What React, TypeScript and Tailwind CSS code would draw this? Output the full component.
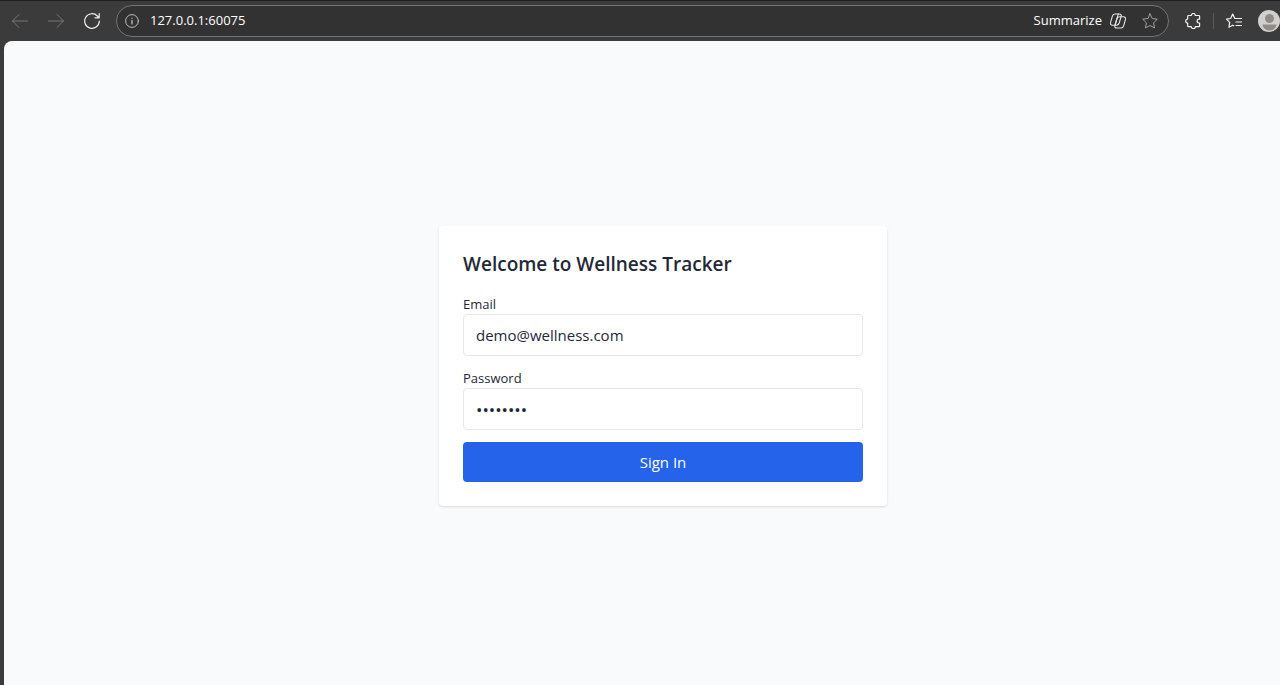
import { useState, type ReactNode } from "react";

type IconProps = { children: ReactNode; className?: string };

function Icon({ children, className = "size-4" }: IconProps) {
  return (
    <svg
      viewBox="0 0 16 16"
      fill="none"
      stroke="currentColor"
      strokeWidth="1"
      strokeLinecap="round"
      strokeLinejoin="round"
      aria-hidden="true"
      className={`shrink-0 ${className}`}
    >
      {children}
    </svg>
  );
}

function ToolButton({ label, children, className }: { label: string; children: ReactNode; className: string }) {
  return (
    <button type="button" aria-label={label} className={`flex shrink-0 items-center justify-center ${className}`}>
      {children}
    </button>
  );
}

function Toolbar() {
  return (
    <header className="flex h-[41px] shrink-0 items-center border-t border-[#202020] bg-[#3b3b3b] pb-px pl-0.5 text-sm text-white">
      <nav className="mr-1.5 flex" aria-label="History">
        <ToolButton label="Back" className="h-8 w-9 text-[#777777]">
          <Icon>
            <path d="M15.5 8H.5M7 1.5.5 8 7 14.5" />
          </Icon>
        </ToolButton>
        <ToolButton label="Forward" className="h-8 w-9 text-[#777777]">
          <Icon>
            <path d="M.5 8h15M9 1.5 15.5 8 9 14.5" />
          </Icon>
        </ToolButton>
        <ToolButton label="Reload" className="h-8 w-9 text-[#f0f0f0]">
          <Icon>
            <path strokeWidth="1.2" d="M15.3 8A7.3 7.3 0 1 1 13.3 3l1.5 1.7M15.2.6v4.2H11" />
          </Icon>
        </ToolButton>
      </nav>

      <div className="flex h-8 min-w-0 flex-1 items-center rounded-full border border-[#747474] bg-[#323232] pr-2.5 pl-2">
        <Icon className="size-3.5 text-[#d0d0d0]">
          <circle cx="8" cy="8" r="7.3" />
          <path strokeWidth="1.3" d="M8 7.3v4M8 4.7v.1" />
        </Icon>
        <input
          aria-label="Address"
          defaultValue="127.0.0.1:60075"
          className="ml-[11px] min-w-0 flex-1 bg-transparent text-[13px] outline-none"
        />
        <button type="button" className="flex items-center gap-2 text-[13px]">
          Summarize
          <Icon className="size-4 text-[#e4e4e4]">
            <path
              strokeWidth="1.1"
              d="M4.9 1h4.3c1.6 0 2.4 1 1.9 2.600L9.200 10c-.5 1.500-1.300 2.200-2.800 2.200H2.500C.9 12.200.1 11 .6 9.400l1.700-6C2.700 1.800 3.500 1 4.900 1Z"
            />
            <path
              strokeWidth="1.1"
              d="M11.100 15H6.800c-1.600 0-2.400-1-1.900-2.600L6.800 6c.5-1.500 1.300-2.200 2.800-2.200h3.900c1.600 0 2.400 1.200 1.900 2.800l-1.700 6c-.4 1.600-1.200 2.400-2.600 2.400Z"
            />
            <path strokeWidth="1.1" d="m8.300 1-3 10.500" />
          </Icon>
        </button>
        <ToolButton label="Add to favorites" className="ml-4 text-[#a0a0a0]">
          <Icon>
            <path d="m8 .8 2.200 4.700 5.100.7-3.700 3.600.9 5.100L8 12.500l-4.500 2.400.9-5.100L.7 6.200l5.100-.7Z" />
          </Icon>
        </ToolButton>
      </div>

      <div className="ml-4 flex shrink-0 items-center text-[#f2f2f2]">
        <ToolButton label="Extensions" className="">
          <Icon>
            <path
              strokeWidth="1.2"
              d="M3.500 2.500h2.800a2 2 0 0 1 4 0h3.500c.5 0 .8.3.8.8v2.900H14a1.900 1.900 0 0 0 0 3.800h.6v2.900c0 .5-.3.800-.8.8h-3.500a2 2 0 0 1-4 0H3.500c-.5 0-.8-.3-.8-.8v-2.800a2 2 0 0 1 0-4V3.300c0-.5.3-.8.8-.8Z"
            />
          </Icon>
        </ToolButton>
        <span className="mx-3 h-4 w-px bg-[#5c5c5c]" />
        <ToolButton label="Favorites" className="">
          <Icon>
            <path
              strokeWidth="1.2"
              d="M10 5.500H8.800L6.700 1 4.600 5.500.5 6.100l3.200 3.300-.8 4.900 3.800-2.100 1 .6M10 5.500h5.500M10 9h5.500M10 12.500h5.500"
            />
          </Icon>
        </ToolButton>
        <ToolButton label="Profile" className="ml-4">
          <svg viewBox="0 0 22 22" className="size-[22px]" aria-hidden="true">
            <circle cx="11" cy="11" r="11" fill="#d2d0ce" />
            <circle cx="11.5" cy="8.5" r="4.5" fill="#8f8b88" />
            <path d="M4.500 14.500h14c-.3 3.600-3.500 6-7 6s-6.700-2.400-7-6Z" fill="#8f8b88" />
          </svg>
        </ToolButton>
      </div>
    </header>
  );
}

type FieldProps = {
  id: string;
  label: string;
  type: string;
  value: string;
  onChange: (value: string) => void;
};

function Field({ id, label, type, value, onChange }: FieldProps) {
  return (
    <div className="mb-3">
      <label htmlFor={id} className="block text-[13px] leading-5">
        {label}
      </label>
      <input
        id={id}
        type={type}
        value={value}
        onChange={(event) => onChange(event.target.value)}
        className={`block h-[42px] w-full rounded border border-gray-200 px-3 outline-none ${
          type === "password" ? "text-[17px]" : "text-[15px]"
        }`}
      />
    </div>
  );
}

function SignInCard() {
  const [email, setEmail] = useState("demo@wellness.com");
  const [password, setPassword] = useState("wellness");

  return (
    <form
      onSubmit={(event) => event.preventDefault()}
      className="w-full max-w-md rounded bg-white p-6 shadow-sm"
    >
      <h1 className="mb-4 text-[19px] leading-7 font-semibold">Welcome to Wellness Tracker</h1>
      <Field id="email" label="Email" type="email" value={email} onChange={setEmail} />
      <Field id="password" label="Password" type="password" value={password} onChange={setPassword} />
      <button type="submit" className="w-full rounded bg-[#2563eb] py-2 text-[15px] leading-6 text-white">
        Sign In
      </button>
    </form>
  );
}

export default function App() {
  return (
    <div className="flex h-screen flex-col overflow-hidden bg-[#3b3b3b] font-['Open_Sans','Noto_Sans',sans-serif] text-[#1f2937]">
      <Toolbar />
      <main className="ml-1 flex flex-1 items-center justify-center rounded-tl-lg bg-[#f9fafb] pt-1.5 pl-[42px]">
        <SignInCard />
      </main>
    </div>
  );
}
